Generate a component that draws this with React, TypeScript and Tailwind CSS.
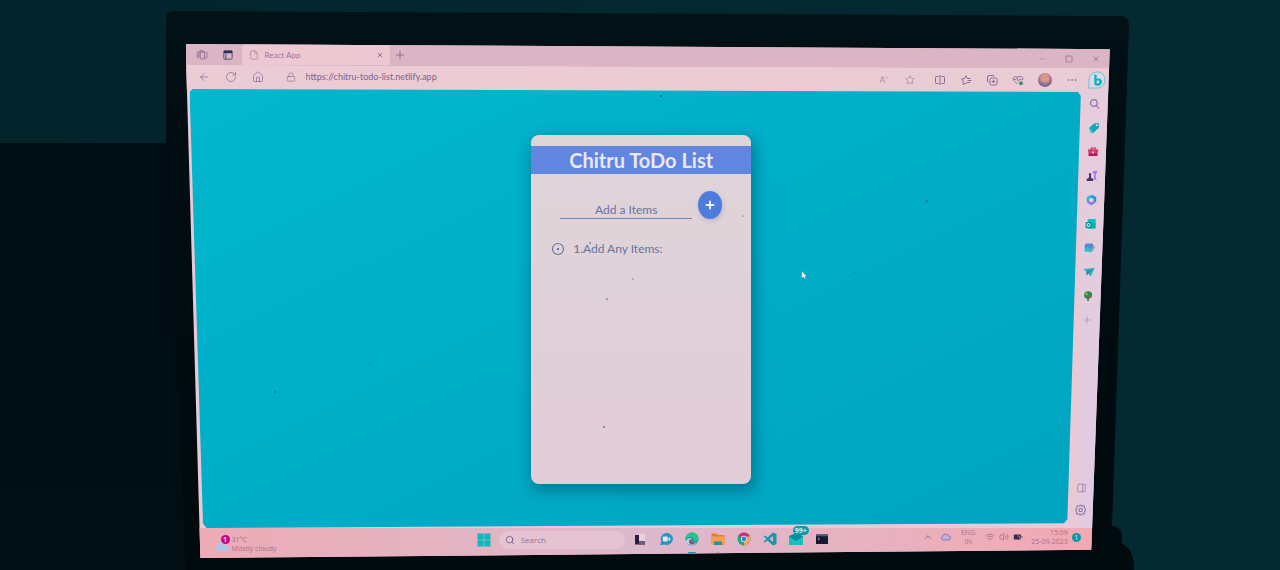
import React, { useState } from "react";
import {
  ArrowLeft, RotateCw, House, Lock, X, Plus, File, Star, Ellipsis,
  Search, Square, Minus, ChevronUp, Wifi, Volume2, PanelRight,
} from "lucide-react";

const iconButton = "flex size-3 shrink-0 items-center justify-center";

function IconButton({ label, children }: { label: string; children: React.ReactNode }) {
  return (
    <button type="button" aria-label={label} className={iconButton}>
      {children}
    </button>
  );
}

function Room() {
  return (
    <svg className="absolute inset-0 size-full" viewBox="0 0 1280 570" preserveAspectRatio="none" aria-hidden="true">
      <defs>
        <linearGradient id="wall" x1="0" y1="0" x2="1" y2="0">
          <stop offset="0" stopColor="#03232b" />
          <stop offset="0.5" stopColor="#04282f" />
          <stop offset="1" stopColor="#042931" />
        </linearGradient>
        <linearGradient id="shade" x1="0" y1="0" x2="0" y2="1">
          <stop offset="0" stopColor="#000d14" />
          <stop offset="1" stopColor="#010f14" />
        </linearGradient>
        <linearGradient id="bezel" x1="0" y1="0" x2="0" y2="1">
          <stop offset="0" stopColor="#021318" />
          <stop offset="0.12" stopColor="#010e13" />
          <stop offset="1" stopColor="#010a0d" />
        </linearGradient>
      </defs>
      <rect width="1280" height="570" fill="url(#wall)" />
      <rect y="143" width="200" height="427" fill="url(#shade)" />
      <path d="M166 18Q166 11 174 11L1120 16Q1129 16 1129 25L1112 526Q1121 526 1122 536L1122 544Q1134 548 1134 570H186L166 143Z" fill="url(#bezel)" />
    </svg>
  );
}

function BingLogo() {
  return (
    <svg viewBox="0 0 20 20" className="size-[18px]">
      <path d="M10 1a9 9 0 1 1 0 18H1v-9a9 9 0 0 1 9-9Z" fill="#dcd9ec" stroke="#62bcd0" strokeWidth="1" />
      <path d="M7 3.500l2.600 1v4.200c3.600-1.200 6 .6 6 3.300 0 3-2.600 4.800-5.400 4.500C8 16.200 7 15 7 13Zm2.600 7.700v2c0 1.200 3 1 3-1.200 0-1.500-1.700-1.700-3-.8Z" fill="#0bb2c0" fillRule="evenodd" />
    </svg>
  );
}

function Workspaces() {
  return (
    <svg viewBox="0 0 14 14" className="size-3" fill="none" stroke="currentColor">
      <rect x="5" y="3.500" width="5" height="8" rx="1" />
      <path d="M3 10.500 1.500 9.500V4L6 1.500l2 1M12 3.500l.8 1V9l-2.800 3" />
      <path d="M3.500 10V4.500L8 2.500l3 1" />
    </svg>
  );
}
function SplitScreen() {
  return (
    <svg viewBox="0 0 12 12" className="size-3" fill="none" stroke="currentColor">
      <path d="M4.700 2.500H2.500a1 1 0 0 0-1 1v5a1 1 0 0 0 1 1h2.200M7.300 2.500h2.200a1 1 0 0 1 1 1v5a1 1 0 0 1-1 1H7.300M6 1v10" />
    </svg>
  );
}
function Favorites() {
  return (
    <svg viewBox="0 0 12 12" className="size-3" fill="none" stroke="currentColor" strokeLinejoin="round" strokeLinecap="round">
      <path d="M6.500 9 3 10.500l.3-3.300L1.500 5l3-.5L6 1.800l1.500 2.700H10M8 6.500h3M7.500 8.500h2.500" />
    </svg>
  );
}
function Collections() {
  return (
    <svg viewBox="0 0 12 12" className="size-3" fill="none" stroke="currentColor">
      <rect x="4" y="4" width="7" height="7" rx="1.500" />
      <path d="M2.500 8.500a1.500 1.500 0 0 1-1-1.500V3A1.500 1.500 0 0 1 3 1.500h4A1.500 1.500 0 0 1 8.500 2.500M7.500 5.800v3.400M5.800 7.500h3.400" />
    </svg>
  );
}
function Essentials() {
  return (
    <svg viewBox="0 0 12 12" className="size-3" fill="none" stroke="currentColor">
      <path d="M5.500 10 2 6.500C0 4 3 .800 6 3.500c3-2.700 6 0 4.500 2.700M1.500 5.500h2l1.300-1.500L6.500 7l1-1.500h2" />
      <circle cx="9" cy="9.200" r="2" fill="#4c8877" stroke="none" />
    </svg>
  );
}
function SettingsIcon() {
  return (
    <svg viewBox="0 0 12 12" className="size-3" fill="none" stroke="currentColor">
      <path d="M4.500 2 6 1l1.500 1h2.200l.3 2 1 2-1 2-.3 2H7.500L6 11l-1.500-1H2.300L2 8 1 6l1-2 .3-2Z" />
      <circle cx="6" cy="6" r="1.700" />
    </svg>
  );
}

function Shopping() {
  return (
    <svg viewBox="0 0 12 12" className="size-3">
      <path d="M1 6 6 1.500l4.500-.5.500 4.500L6 10.500 3.500 11Z" fill="#10a7bd" />
      <path d="M1 6l2.500 5 2-1L2 6Z" fill="#17cfd0" />
      <circle cx="8.700" cy="3.300" r="1" fill="#d9f2f2" />
    </svg>
  );
}
function Toolbox() {
  return (
    <svg viewBox="0 0 12 12" className="size-3">
      <path d="M4 3.500V2h4v1.500" fill="none" stroke="#b7225d" />
      <rect x="1" y="3.300" width="10" height="3.200" fill="#e5336c" />
      <rect x="1.500" y="6.500" width="9" height="3.500" fill="#bb1854" />
      <rect x="5" y="5.500" width="2" height="2" fill="#f5c0cf" />
    </svg>
  );
}
function Chess() {
  return (
    <svg viewBox="0 0 12 12" className="size-3">
      <path d="M6.500 1h4v2l-1 1v4l1.500 1.500H7L8 7V4L6.500 3Z" fill="#a875e6" />
      <path d="M3.500 3a1.500 1.500 0 0 1 1 2.600L5 8l2 1v2H.500V9l2-1 .5-2.400A1.500 1.500 0 0 1 3.500 3Z" fill="#3e3862" />
    </svg>
  );
}
function Office() {
  return (
    <svg viewBox="0 0 12 12" className="size-3">
      <path d="M6 2 2.500 4v4" fill="none" stroke="#25bfcf" strokeWidth="2.600" />
      <path d="M6 2l3.500 2v4" fill="none" stroke="#2b8fd3" strokeWidth="2.600" />
      <path d="M2.500 7.800 6 9.800l3.500-2" fill="none" stroke="#8f78e2" strokeWidth="2.400" />
    </svg>
  );
}
function Outlook() {
  return (
    <svg viewBox="0 0 12 12" className="size-3">
      <rect x="3" y="1" width="8" height="9.500" rx="1" fill="#12bfc5" />
      <path d="M3 6.500 11 5v5.500H3Z" fill="#0bb1a6" />
      <rect x="1" y="4" width="6" height="6" rx="1" fill="#078d92" />
      <circle cx="4" cy="7" r="1.500" fill="none" stroke="#d6f3f0" />
    </svg>
  );
}
function ImageTool() {
  return (
    <svg viewBox="0 0 12 12" className="size-3">
      <rect x="1" y="1.500" width="8.500" height="8" rx="1.500" fill="#5a86d8" />
      <path d="M1 9V7l3-2.500L8.500 9.500H2Z" fill="#19cbd2" />
      <path d="M10.500 4 11.500 5 6.500 10.500 5 11l.4-1.500Z" fill="#22a9a5" stroke="#e3cddf" strokeWidth=".5" />
      <path d="m10 3.500 1.500 1.300-1 1L9 4.600Z" fill="#ee9a68" />
    </svg>
  );
}
function PaperPlane() {
  return (
    <svg viewBox="0 0 12 12" className="size-3">
      <path d="M.500 3 11.500 2 8 10.500 5.500 7.500 4 9.500 3.500 6Z" fill="#24b4c1" />
      <path d="M3.500 6 11.500 2 5.500 7.500 4 9.500Z" fill="#4a7d9b" />
    </svg>
  );
}
function Tree() {
  return (
    <svg viewBox="0 0 12 12" className="size-3">
      <path d="M5.300 7h1.600v4H5.300Z" fill="#88523e" />
      <ellipse cx="6" cy="5" rx="4" ry="3.800" fill="#258b4b" />
      <circle cx="4.500" cy="4" r="1.500" fill="#82ad33" />
      <circle cx="7.800" cy="6" r="1.300" fill="#bb4c3c" />
    </svg>
  );
}
function SidebarSearch() {
  return (
    <svg viewBox="0 0 12 12" className="size-3" fill="none">
      <circle cx="5" cy="5" r="3.300" stroke="#8077a3" strokeWidth="1.200" />
      <path d="m7.500 7.500 3 3" stroke="#c66be0" strokeWidth="1.500" />
    </svg>
  );
}

const sidebarApps = [
  { label: "Search", icon: <SidebarSearch /> },
  { label: "Shopping", icon: <Shopping /> },
  { label: "Tools", icon: <Toolbox /> },
  { label: "Games", icon: <Chess /> },
  { label: "Microsoft 365", icon: <Office /> },
  { label: "Outlook", icon: <Outlook /> },
  { label: "Image Creator", icon: <ImageTool /> },
  { label: "Drop", icon: <PaperPlane /> },
  { label: "E-tree", icon: <Tree /> },
  { label: "Customize", icon: <Plus className="size-2.5 text-[#9c82a8]" strokeWidth={1.5} /> },
];

function TabStrip() {
  return (
    <div className="flex h-[21px] items-center">
      <div className="flex h-full w-14 items-center gap-3.5 pl-2.5 text-[#8a6c92]">
        <IconButton label="Workspaces"><Workspaces /></IconButton>
        <IconButton label="Tab actions">
          <svg viewBox="0 0 12 12" className="size-2.5">
            <rect x="1" y="1" width="10" height="10" rx="1" fill="none" stroke="#3b4568" />
            <path d="M1 1h10v3H1Z" fill="#26345a" />
            <path d="M3.500 4v7" stroke="#3b4568" />
          </svg>
        </IconButton>
      </div>
      <div className="flex h-full w-[148px] items-center gap-1.5 rounded-t-sm bg-[#edc8d2] pr-1 pl-[7px] text-[#9a7798]">
        <File className="size-2.5 shrink-0" strokeWidth={1.5} />
        <span className="flex-1 font-['Lato',sans-serif] text-[8px] leading-3">React App</span>
        <IconButton label="Close tab"><X className="size-2 text-[#634c6f]" /></IconButton>
      </div>
      <div className="pl-1 text-[#786080]">
        <IconButton label="New tab"><Plus className="size-3" strokeWidth={1.5} /></IconButton>
      </div>
      <div className="ml-auto flex gap-[15px] pt-2 pr-2 text-[#8b6289]">
        <IconButton label="Minimize"><Minus className="size-2" strokeWidth={1.2} /></IconButton>
        <IconButton label="Restore"><Square className="size-2" /></IconButton>
        <IconButton label="Close"><X className="size-2" /></IconButton>
      </div>
    </div>
  );
}

function AddressBar() {
  return (
    <div className="flex h-6 items-center pl-3 text-[#896c94]">
      <div className="flex gap-[15px]">
        <IconButton label="Back"><ArrowLeft className="size-3" strokeWidth={1.5} /></IconButton>
        <IconButton label="Refresh"><RotateCw className="size-3" strokeWidth={1.5} /></IconButton>
        <IconButton label="Home"><House className="size-3" strokeWidth={1.5} /></IconButton>
      </div>
      <Lock className="ml-[22px] size-2.5 shrink-0" strokeWidth={1.5} />
      <input
        aria-label="Address"
        readOnly
        value="https://chitru-todo-list.netlify.app"
        className="ml-2.5 w-48 min-w-0 bg-transparent font-['Lato',sans-serif] text-[9px] leading-3 text-[#80638b] outline-none"
      />
      <div className="ml-auto flex items-center gap-3.5 pt-1.5 pr-1">
        <button type="button" aria-label="Read aloud" className="flex size-3 items-center justify-center text-[9px] leading-3 text-[#a78ca9]">
          A<sup className="text-[6px]">»</sup>
        </button>
        <IconButton label="Favorite"><Star className="size-2.5" strokeWidth={1.3} /></IconButton>
        <div className="flex items-center gap-3.5 pl-1">
          <IconButton label="Split screen"><SplitScreen /></IconButton>
          <IconButton label="Favorites"><Favorites /></IconButton>
          <IconButton label="Collections"><Collections /></IconButton>
          <IconButton label="Browser essentials"><Essentials /></IconButton>
          <button type="button" aria-label="Profile" className="size-3.5 rounded-full bg-[radial-gradient(circle_at_50%_35%,#d9968b_30%,#7b6794_65%)]" />
          <IconButton label="More"><Ellipsis className="size-3" strokeWidth={1.5} /></IconButton>
        </div>
        <button type="button" aria-label="Bing chat" className="-ml-1"><BingLogo /></button>
      </div>
    </div>
  );
}

function TodoCard() {
  const [draft, setDraft] = useState("");
  const [items, setItems] = useState(["1.Add Any Items:"]);
  function add(event: React.FormEvent) {
    event.preventDefault();
    if (draft.trim()) setItems([...items, draft]);
    setDraft("");
  }
  return (
    <section className="min-h-[348px] w-[220px] rounded-lg bg-linear-to-b from-[#ded5d9] to-[#e2ccd7] pt-[11px] font-['Lato',sans-serif] shadow-[2px_5px_14px_2px_rgba(0,65,95,0.45)]">
      <h1 className="bg-[#6285df] text-center text-[20px] leading-7 font-bold text-[#e9e8f8]">Chitru ToDo List</h1>
      <form onSubmit={add} className="flex items-start gap-1.5 pt-[17px] pl-[29px]">
        <input
          aria-label="Add a Items"
          placeholder="Add a Items"
          value={draft}
          onChange={(e) => setDraft(e.target.value)}
          className="mt-2.5 h-[18px] w-[132px] border-b border-[#6f88bd] bg-transparent text-center text-[12px] text-[#66749f] outline-none placeholder:text-[#66749f]"
        />
        <button type="submit" aria-label="Add" className="flex h-7 w-6 items-center justify-center rounded-[50%] bg-[#4d7cdb] text-[#eeeafa] shadow-[1px_2px_4px_rgba(90,90,160,0.25)]">
          <Plus className="size-3" strokeWidth={4} />
        </button>
      </form>
      <ul className="flex flex-col gap-2 pt-[22px] pl-5">
        {items.map((item, i) => (
          <li key={i} className="flex items-center gap-2 text-[12px] leading-4 text-[#66749f]">
            <button type="button" aria-label={"Remove " + item} onClick={() => setItems(items.filter((_, n) => n !== i))}>
              <svg viewBox="0 0 14 14" className="size-3.5">
                <circle cx="7" cy="7" r="5.500" fill="none" stroke="#6472a4" strokeWidth="1.100" />
                <path d="M6 6 8 8M8 6 6 8" stroke="#6472a4" />
              </svg>
            </button>
            {item}
          </li>
        ))}
      </ul>
    </section>
  );
}

function Specks() {
  return (
    <svg className="pointer-events-none absolute inset-0 size-full" viewBox="0 0 1280 570" preserveAspectRatio="none" aria-hidden="true">
      <g fill="#27465b">
        <circle cx="661" cy="96" r="1" /><circle cx="607" cy="299" r=".7" /><circle cx="604" cy="427" r=".8" />
        <circle cx="275" cy="392" r=".8" /><circle cx="927" cy="201" r=".8" /><circle cx="854" cy="273" r=".6" />
        <circle cx="590" cy="243" r=".7" /><circle cx="633" cy="279" r=".6" /><circle cx="370" cy="364" r=".5" />
        <circle cx="743" cy="216" r=".6" />
      </g>
      <path d="M801.500 270.500v8l2-1.500 1 2 1.500-.5-1-2h2Z" fill="#f2edf4" stroke="#36687c" strokeWidth=".4" />
    </svg>
  );
}

function TaskView() {
  return <svg viewBox="0 0 14 14" className="size-3.5"><rect x="5" y="2" width="7" height="7" fill="#e9d1da" /><path d="M2 3h4v6h6v3.500H2Z" fill="#25213d" /><path d="M6 9h6v3.500H6Z" fill="#705a72" /></svg>;
}
function Chat() {
  return <svg viewBox="0 0 14 14" className="size-3.5"><path d="M7.500 1a6 6 0 1 1-2 11.500L1 13l1.300-3.500A6 6 0 0 1 7.500 1Z" fill="#2695c0" /><rect x="3.800" y="4.500" width="5" height="5" rx="1" fill="#e5e3f2" /><path d="m9.200 6.500 2-1.500v4l-2-1.500Z" fill="#e5e3f2" /></svg>;
}
function Edge() {
  return <svg viewBox="0 0 14 14" className="size-3.5"><circle cx="7" cy="7" r="6.500" fill="#138fae" /><path d="M.600 6.500C1 2.500 4 .500 7 .500c4 0 6.500 2.700 6.500 5.800 0 2-1.600 3.200-3.500 3.200-1.500 0-2-.5-1.500-1.300C9 7 8 5 5.500 5 3 5 1 6 .600 8Z" fill="#28c58b" /><path d="M1 9.500C1.500 7 4 5.800 6.500 6.200c-.6 3 1.500 4.800 5.500 4-1.500 2-3.500 3-6 2.500-2.500-.3-4.500-1.200-5-3.200Z" fill="#cfc9de" /><path d="M4 10c0-1.500.8-2.800 2.200-3.200-.3 2.600 1.400 4.200 5 3.800-2 2-6.500 2.500-7.200-.6Z" fill="#74577a" /></svg>;
}
function Folder() {
  return <svg viewBox="0 0 14 14" className="size-3.5"><path d="M.500 1.500h5L7 3h6.500v10H.500Z" fill="#e77b3c" /><path d="M.500 4.500h13V13H.500Z" fill="#fb9d56" /><path d="M3 9.500h8V13H3Z" fill="#17999f" /></svg>;
}
function Chrome() {
  return <svg viewBox="0 0 14 14" className="size-3.5"><circle cx="7" cy="7" r="6.500" fill="#19a681" /><path d="M7 7 1.400 3.700A6.500 6.500 0 0 1 12.600 3.700Z" fill="#e32582" /><path d="M7 7 12.600 3.700A6.500 6.500 0 0 1 7 13.500Z" fill="#f79b57" /><circle cx="7" cy="7" r="3.200" fill="#eadde6" /><circle cx="7" cy="7" r="2.400" fill="#2a92bf" /></svg>;
}
function Code() {
  return <svg viewBox="0 0 14 14" className="size-3.5"><path d="M10 .500 13.500 2v10L10 13.500 4.500 8.500 2 10.500.600 9.700 3.500 7 .600 4.300 2 3.500l2.500 2ZM10 4 6.500 7 10 10Z" fill="#1595ae" fillRule="evenodd" /></svg>;
}
function Mail() {
  return <svg viewBox="0 0 14 14" className="size-3.5"><path d="M0 4 7 1l7 3v9H0Z" fill="#0d8b9e" /><path d="M0 4.500 7 9l7-4.500V13H0Z" fill="#18c0bd" /></svg>;
}
function Terminal() {
  return <svg viewBox="0 0 14 14" className="size-3.5"><rect x="1" y="2.500" width="12" height="9.500" fill="#141a36" /><path d="M1 2.500h12v1.800H1Z" fill="#50557a" /><path d="m3 6 1.500 1L3 8" stroke="#cbc8dc" fill="none" strokeWidth=".7" /></svg>;
}

const taskbarApps = [
  { label: "Task view", icon: <TaskView /> },
  { label: "Chat", icon: <Chat /> },
  { label: "Microsoft Edge", icon: <Edge />, mark: "bg-[#1598ad] w-2" },
  { label: "File Explorer", icon: <Folder />, mark: "bg-[#a0829e] w-0.5" },
  { label: "Google Chrome", icon: <Chrome /> },
  { label: "Visual Studio Code", icon: <Code />, mark: "bg-[#a0829e] w-0.5" },
  { label: "Mail", icon: <Mail />, badge: "99+" },
  { label: "Terminal", icon: <Terminal /> },
];

function Taskbar() {
  return (
    <footer className="grid h-[30px] grid-cols-[1fr_auto_1fr] items-start bg-linear-to-r from-[#edabb4] via-[#dcb9cd] to-[#f3a8b1] text-[7px] leading-[9px] text-[#a66f8e]">
      <button type="button" className="flex items-center gap-0.5 pt-[7px] pl-7 text-left">
        <span className="relative">
          <svg viewBox="0 0 16 16" className="size-4"><path d="M3 15a3 3 0 0 1 0-5.500 4.500 4.500 0 0 1 8.500-.5A3 3 0 0 1 12 15Z" fill="#b2c4e4" /></svg>
          <span className="absolute -top-px right-0 flex size-[9px] items-center justify-center rounded-full bg-[#c40a82] text-[7px] leading-[9px] font-bold text-[#f5cfe3]">1</span>
        </span>
        <span>31°C<br />Mostly cloudy</span>
      </button>
      <div className="flex items-center gap-3 pt-0.5 pl-2.5">
        <button type="button" aria-label="Start" className="size-3.5">
          <svg viewBox="0 0 14 14" className="size-3.5"><path d="M.500.500h6.200v6.200H.500Zm6.800 0h6.200v6.200H7.300ZM.500 7.300h6.200v6.200H.500Zm6.800 0h6.200v6.200H7.300Z" fill="#0cb9bc" /></svg>
        </button>
        <label className="-ml-1 flex h-[18px] w-[126px] items-center gap-1.5 rounded-full bg-[#e5c3d0] px-1.5">
          <Search className="size-2.5 shrink-0 text-[#735c84]" />
          <input aria-label="Search" placeholder="Search" className="w-full min-w-0 bg-transparent text-[8px] leading-3 outline-none placeholder:text-[#967393]" />
        </label>
        <div className="-ml-1 flex gap-3">
          {taskbarApps.map((app) => (
            <button key={app.label} type="button" aria-label={app.label} className="relative flex h-5 w-3.5 justify-center pt-0.5">
              {app.icon}
              {app.mark && <span className={"absolute -bottom-1 h-0.5 rounded-full " + app.mark} />}
              {app.badge && (
                <span className="absolute -top-1 left-1 rounded-full bg-[#0f98a5] px-0.5 text-[7px] leading-[9px] font-bold text-[#d2eef0]">{app.badge}</span>
              )}
            </button>
          ))}
        </div>
      </div>
      <div className="flex items-center justify-end gap-1 pr-[29px]">
        <ChevronUp className="mr-1 size-2.5 text-[#765a83]" />
        <svg viewBox="0 0 12 12" className="mr-1.5 size-2.5"><path d="M2 9.500a2.500 2.500 0 0 1 0-4.500 4 4 0 0 1 7.500 0 2.400 2.400 0 0 1 .5 4.500Z" fill="#c9add9" stroke="#7367ac" /></svg>
        <span className="mr-1.5 text-center">ENG<br />IN</span>
        <Wifi className="size-2.5" />
        <Volume2 className="size-2.5" />
        <svg viewBox="0 0 12 12" className="size-2.5"><rect x="1" y="3" width="8.500" height="6" rx="1" fill="#382b4a" /><path d="M10 5h1.500v2H10Z" fill="#694e6c" /><path d="m6 4 3 4" stroke="#e6b4c5" /></svg>
        <time className="ml-1 text-right">15:09<br />25-09-2023</time>
        <span className="flex size-[9px] items-center justify-center rounded-full bg-[#0e96a8] text-[7px] text-[#d2eef0]">1</span>
      </div>
    </footer>
  );
}

export default function App() {
  return (
    <main className="relative flex min-h-screen flex-col overflow-hidden bg-[#03232b] pt-11 pr-[13.3%] pb-3 pl-[14.5%] font-['Open_Sans',sans-serif]">
      <Room />
      <div className="relative flex flex-1 flex-col bg-[#e7cad6] [clip-path:polygon(0_0,100%_1%,98%_98.4%,1.6%_100%)]">
        <header className="bg-[linear-gradient(180.2deg,#dbb5c3_50%,#ebccd5_51%)]">
          <TabStrip />
          <AddressBar />
        </header>
        <div className="flex flex-1">
          <div className="ml-1 flex flex-1 justify-center bg-linear-to-br from-[#02b7ce] via-[#00adc7] to-[#00a3c0] pt-[46px] pb-11 pl-3 [clip-path:polygon(0_3px,3px_0,99.700%_3px,100%_7px,98.500%_98%,98.100%_98.900%,1.900%_100%,1.500%_99%)]">
            <TodoCard />
          </div>
          <aside className="flex w-[29px] shrink-0 flex-col items-center bg-linear-to-b from-[#e6cddb] to-[#dfcbe2] pt-[9px] pb-3">
            <nav aria-label="Sidebar" className="flex flex-1 origin-top -skew-x-2 flex-col gap-3">
              {sidebarApps.map((app) => (
                <IconButton key={app.label} label={app.label}>{app.icon}</IconButton>
              ))}
              <div className="mt-auto flex flex-col gap-2.5 text-[#8874a4]">
                <IconButton label="Hide sidebar"><PanelRight className="size-2.5" strokeWidth={1.5} /></IconButton>
                <IconButton label="Settings"><SettingsIcon /></IconButton>
              </div>
            </nav>
          </aside>
        </div>
        <Taskbar />
      </div>
      <Specks />
    </main>
  );
}
